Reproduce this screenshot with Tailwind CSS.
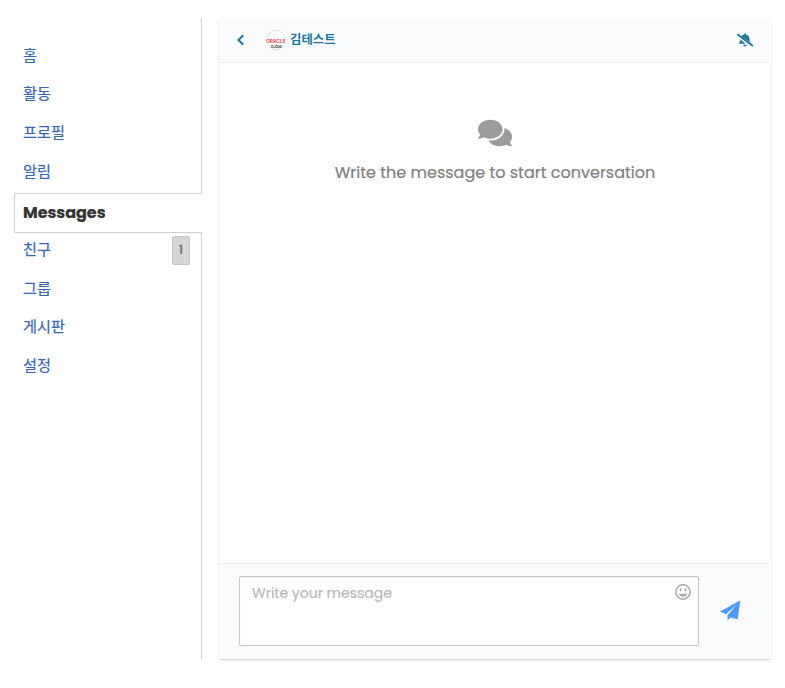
<!DOCTYPE html>
<html lang="ko">
<head>
<meta charset="utf-8">
<title>Messages</title>
<script src="https://cdn.jsdelivr.net/npm/@tailwindcss/browser@4"></script>
</head>
<body class="bg-white font-[Poppins,Inter,'Noto_Sans_CJK_KR',sans-serif]">
<div class="flex h-[688px] w-[785px] pt-[18px] pl-[14px]">
  <nav class="flex h-[641px] w-[188px] flex-col text-[15.2px] leading-[20px] text-[#3a66b0] [-webkit-text-stroke:0.2px]">
    <div class="flex h-[175px] flex-col gap-[18.7px] border-r border-[#d0d0d0] pt-[27.7px] pl-[9px]">
      <a>홈</a><a>활동</a><a>프로필</a><a>알림</a>
    </div>
    <div class="flex h-[40px] items-center rounded-l-[2px] border border-r-0 border-[#d0d0d0] pl-[8px] text-[16px] font-bold text-[#333]"><span class="tracking-[-0.05px]">Messages</span></div>
    <div class="flex flex-1 flex-col gap-[18.5px] border-r border-[#d0d0d0] pt-[7px] pl-[9px]">
      <a class="flex h-[20px] items-center justify-between pr-[11px]">친구<span class="flex h-[29px] w-[18px] items-center justify-center rounded-[2px] border border-[#c6c6c6] bg-[#d6d6d6] text-[12px] text-[#555]">1</span></a>
      <a>그룹</a><a>게시판</a><a>설정</a>
    </div>
  </nav>
  <main class="ml-[17px] flex h-[641px] w-[552px] flex-col rounded-[2px] bg-white shadow-[0_1px_2px_rgba(0,0,0,0.2)]">
    <header class="flex h-[45px] items-center border-b border-[#eceef0] bg-[#f9fbfd] pl-[17px] text-[#21759b]">
      <svg class="h-[12px] w-[9px]" viewBox="0 0 9 12" fill="none" stroke="currentColor" stroke-width="2"><path d="M7.3 1.2 2.5 6l4.8 4.8"/></svg>
      <svg class="ml-[20px] h-[22px] w-[22px] overflow-visible" viewBox="0 0 22 22"><circle cx="11" cy="11" r="9.5" fill="#fff" stroke="#dedede"/><rect y="8" width="22" height="8" fill="#f9fbfd"/><g transform="scale(1.35 1)"><text x=".8" y="14.4" textLength="14.6" lengthAdjust="spacingAndGlyphs" font-family="Inter" font-size="4.2" font-weight="600" fill="#f03a3a">ORACLE</text><text x="4.4" y="19.2" textLength="8" lengthAdjust="spacingAndGlyphs" font-family="Inter" font-size="3" font-weight="800" fill="#444">CLOUD</text></g></svg>
      <span class="ml-[3px] pb-[2px] font-['Noto_Sans_CJK_KR'] text-[12.4px] leading-[18px] font-bold">김테스트</span>
      <svg class="mr-[17px] ml-auto h-[16px] w-[18px]" viewBox="0 0 18 16" fill="currentColor"><path d="M5.4 4.4C6.2 3.2 7 2.7 8.2 2.5V1.5h1.6v1c2.4.5 3.7 2.2 3.7 4.5 0 1.3.2 2.4.9 3.6zM4.5 7.6 9.6 11.7H3c0-1.2 1.4-1.6 1.5-4.1zM7.2 12.8h3.8c-.2 1.2-.9 1.7-1.9 1.7s-1.7-.5-1.9-1.7z"/><path d="m1.3 2.2 15.6 11.9" fill="none" stroke="currentColor" stroke-width="1.9"/></svg>
    </header>
    <section class="flex flex-1 flex-col items-center pt-[53px]">
      <svg class="h-[34px] w-[34px]" viewBox="0 -32 576 576" fill="#9b9b9b"><path d="M416 192c0-88.4-93.1-160-208-160S0 103.6 0 192c0 34.3 14.1 65.9 38 92-13.4 30.2-35.5 54.2-35.8 54.5-2.2 2.3-2.8 5.7-1.5 8.7S4.8 352 8 352c36.6 0 66.9-12.3 88.7-25 32.2 15.7 70.3 25 111.3 25 114.9 0 208-71.6 208-160zm122 220c23.9-26 38-57.7 38-92 0-66.9-53.5-124.2-129.3-148.1.9 6.6 1.3 13.3 1.3 20.1 0 105.9-107.7 192-240 192-10.8 0-21.3-.8-31.7-1.9C207.8 439.6 281.8 480 368 480c41 0 79.1-9.2 111.3-25 21.8 12.7 52.1 25 88.7 25 3.2 0 6.1-1.9 7.3-4.8 1.3-2.9.7-6.3-1.5-8.7-.3-.2-22.4-24.2-35.8-54.5z"/></svg>
      <p class="mt-[11px] text-[16px] leading-[24px] whitespace-nowrap text-[#808080] [-webkit-text-stroke:0.2px]">Write the message to start conversation</p>
    </section>
    <footer class="flex h-[96px] border-t border-[#eceef0] bg-[#f9fbfd] pt-[12px] pl-[20px]">
      <div class="flex h-[70px] w-[460px] justify-between rounded-[2px] border border-[#c4c6c8] bg-white pt-[6px] pr-[7px] pl-[12px] shadow-[inset_0_1px_2px_rgba(0,0,0,0.07)]">
        <span class="text-[14px] leading-[20px] text-[#b9b9b9] [-webkit-text-stroke:0.2px]">Write your message</span>
        <svg class="mt-[1px] h-[16px] w-[16px]" viewBox="0 0 16 16" fill="#a8a8a8"><circle cx="8" cy="8" r="7.2" fill="none" stroke="#a8a8a8" stroke-width="1.5"/><ellipse cx="5.6" cy="5.8" rx=".9" ry="1.8"/><ellipse cx="10.4" cy="5.8" rx=".9" ry="1.8"/><path d="M3.7 9.7h8.6c-.5 1.8-2.2 3-4.3 3s-3.8-1.2-4.3-3z"/></svg>
      </div>
      <svg class="mt-[24px] ml-[21px] h-[21px] w-[21px]" viewBox="0 0 21 21" fill="#4b9bff"><path d="M20.2.5 0 11.5l6 2.7L16.8 4.6 7.6 15.2v5.2l2.8-3 7.3 1.8z"/></svg>
    </footer>
  </main>
</div>
</body>
</html>
